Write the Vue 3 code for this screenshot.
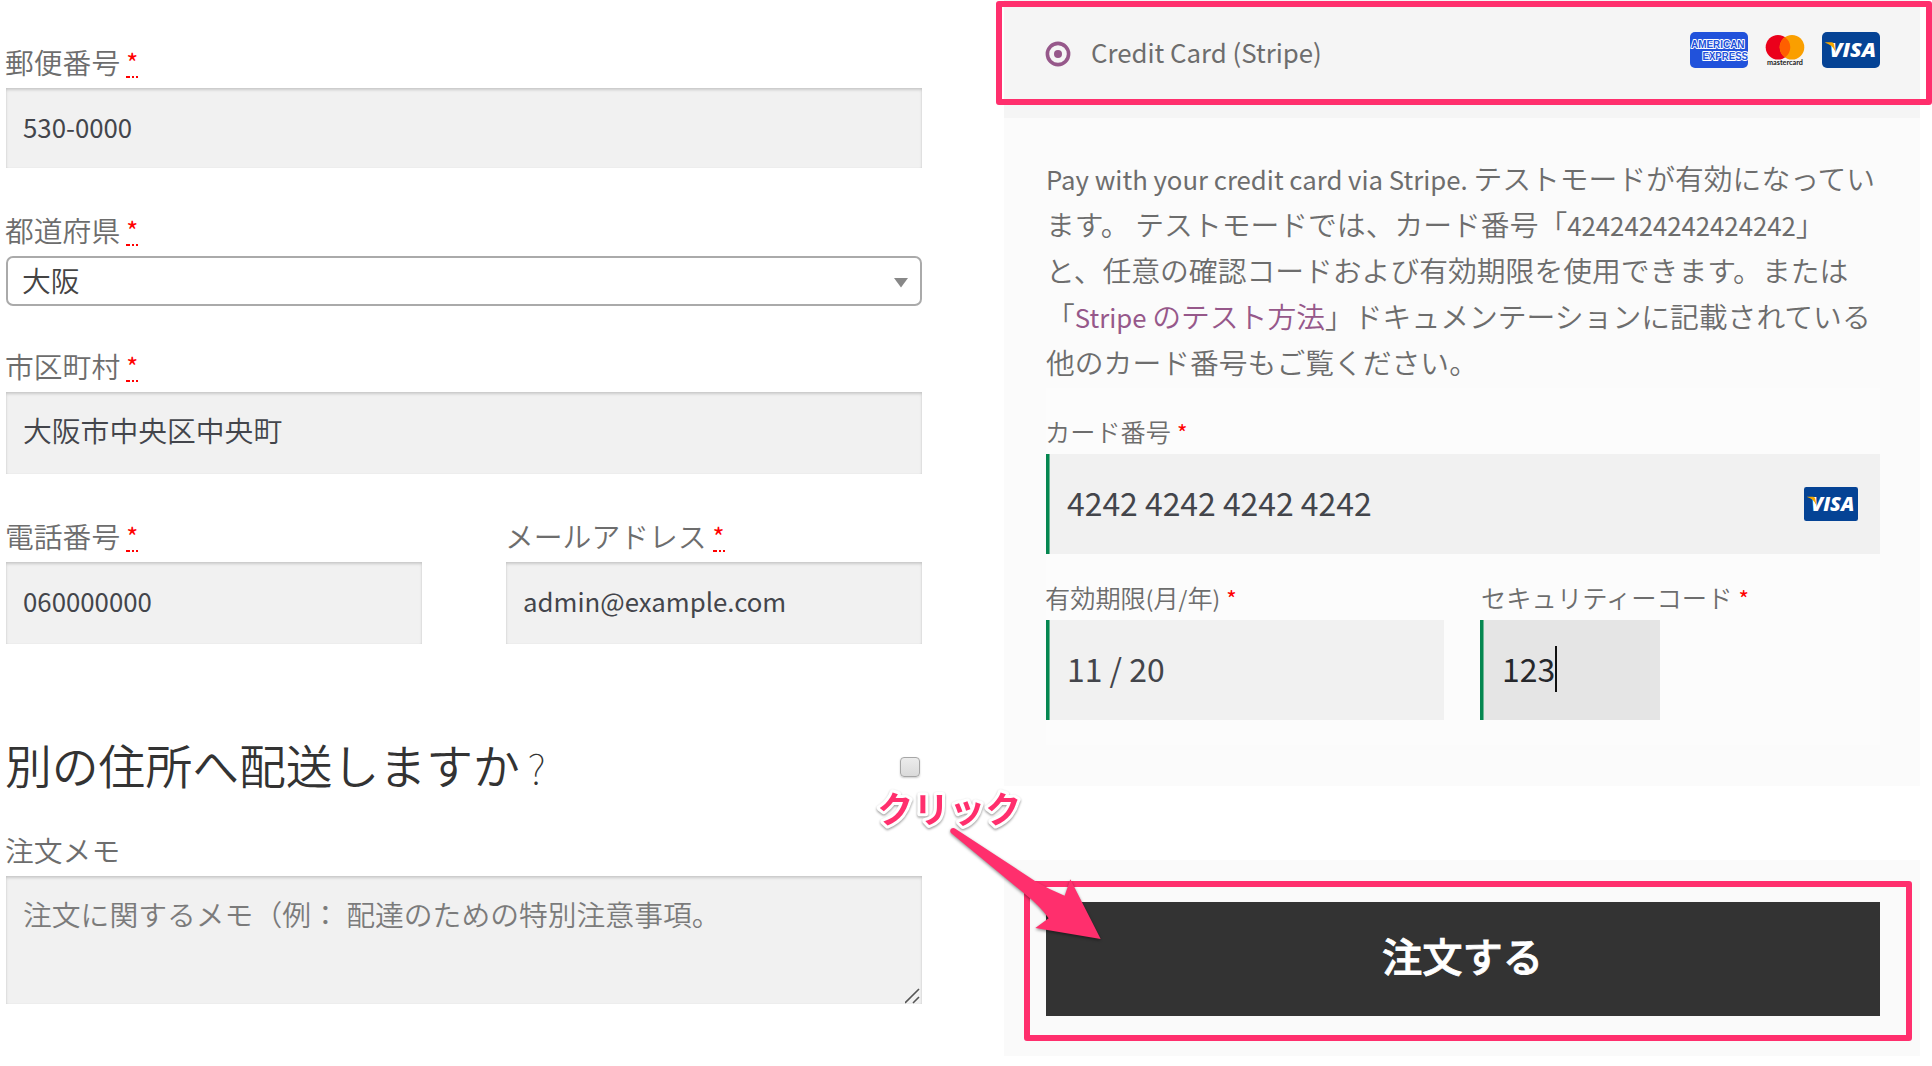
<script setup>
const phone = { label: '電話番号', value: '060000000' }
const email = { label: 'メールアドレス', value: 'admin@example.com' }
</script>

<template>
  <div class="page">
    <section class="billing">
      <div class="label">郵便番号<abbr class="req">*</abbr></div>
      <div class="field zip">530-0000</div>

      <div class="label state-label">都道府県<abbr class="req">*</abbr></div>
      <div class="select">
        <span>大阪</span>
        <svg width="14" height="10" viewBox="0 0 14 10"><path d="M0 0h14L7 9.5z" fill="#888" /></svg>
      </div>

      <div class="label city-label">市区町村<abbr class="req">*</abbr></div>
      <div class="field cjk">大阪市中央区中央町</div>

      <div class="pair">
        <div v-for="f in [phone, email]" :key="f.label" class="half">
          <div class="label">{{ f.label }}<abbr class="req">*</abbr></div>
          <div class="field">{{ f.value }}</div>
        </div>
      </div>

      <div class="shipping">
        <h3>別の住所へ配送しますか<span class="q">?</span></h3>
        <span class="checkbox"></span>
      </div>

      <div class="label">注文メモ</div>
      <div class="field memo">
        <span>注文に関するメモ（例： 配達のための特別注意事項。</span>
        <svg class="grip" width="16" height="16" viewBox="0 0 16 16">
          <path d="M0 15 14 1M8 15l6-6" stroke="#555" stroke-width="1.6" fill="none" />
        </svg>
      </div>
    </section>

    <section class="payment">
      <div class="method">
        <svg class="radio" width="26" height="26" viewBox="0 0 26 26">
          <circle cx="13" cy="13" r="10.6" fill="none" stroke="#96588a" stroke-width="3.6" />
          <circle cx="13" cy="13" r="4" fill="#96588a" />
        </svg>
        <span class="method-name">Credit Card (Stripe)</span>
        <div class="brands">
          <svg width="58" height="36" viewBox="0 0 58 36">
            <rect width="58" height="36" rx="5" fill="#2152db" />
            <g font-family="Liberation Sans, Arial, sans-serif" font-weight="700" font-size="10.4" fill="#2152db" stroke="#fff" stroke-width="2" stroke-linejoin="round" paint-order="stroke">
              <text x="1" y="15.8" textLength="53.5" lengthAdjust="spacingAndGlyphs">AMERICAN</text>
              <text x="12.5" y="27.6" textLength="45.5" lengthAdjust="spacingAndGlyphs">EXPRESS</text>
            </g>
          </svg>
          <svg width="58" height="36" viewBox="0 0 58 36">
            <circle cx="22" cy="15.3" r="12.3" fill="#eb001b" />
            <circle cx="36" cy="15.3" r="12.3" fill="#fa9f00" />
            <path d="M29 5.2a12.3 12.3 0 0 1 0 20.2a12.3 12.3 0 0 1 0-20.2z" fill="#ff5f00" />
            <text x="11" y="32.5" font-family="Lato, sans-serif" font-weight="700" font-size="7.2" fill="#222" textLength="36" lengthAdjust="spacingAndGlyphs">mastercard</text>
          </svg>
          <svg width="58" height="36" viewBox="0 0 58 36">
            <rect width="58" height="36" rx="5" fill="#054395" />
            <text x="7.5" y="25" font-family="Open Sans, sans-serif" font-weight="800" font-style="italic" font-size="20" fill="#fff" textLength="46.5" lengthAdjust="spacingAndGlyphs">VISA</text>
            <path d="M3.3 10.3h6.4q2 0 2.3 2l1.3 7Q10.5 13 3.3 10.7z" fill="#f6a800" />
          </svg>
        </div>
      </div>

      <div class="box">
        <p class="desc">
          <span class="l">Pay with your credit card via Stripe.&nbsp;</span>テストモードが有効になってい<br />ます。<span class="l">&nbsp;</span>テストモードでは、カード番号「<span class="l">4242424242424242</span>」<br />と、任意の確認コードおよび有効期限を使用できます。または<br />「<a><span class="l">Stripe&nbsp;</span>のテスト方法</a>」ドキュメンテーションに記載されている<br />他のカード番号もご覧ください。
        </p>
        <div class="card-form">
          <div class="clabel">カード番号<span class="star">*</span></div>
          <div class="cinput">
            <span>4242 4242 4242 4242</span>
            <svg width="54" height="34" viewBox="0 0 58 36" preserveAspectRatio="none">
              <rect width="58" height="36" rx="2.5" fill="#054395" />
              <text x="7.5" y="25" font-family="Open Sans, sans-serif" font-weight="800" font-style="italic" font-size="20" fill="#fff" textLength="46.5" lengthAdjust="spacingAndGlyphs">VISA</text>
              <path d="M3.3 10.3h6.4q2 0 2.3 2l1.3 7Q10.5 13 3.3 10.7z" fill="#f6a800" />
            </svg>
          </div>
          <div class="crow">
            <div class="expiry">
              <div class="clabel">有効期限<span class="l">(</span>月<span class="l">/</span>年<span class="l">)</span><span class="star">*</span></div>
              <div class="cinput">11 / 20</div>
            </div>
            <div class="cvc">
              <div class="clabel">セキュリティーコード<span class="star">*</span></div>
              <div class="cinput active"><span>123</span><i class="caret"></i></div>
            </div>
          </div>
        </div>
      </div>

      <div class="place">
        <div class="submit">注文する</div>
      </div>
    </section>

    <div class="frame frame-method"></div>
    <div class="frame frame-submit"></div>
    <svg class="callout" width="280" height="220" viewBox="0 0 840 660">
      <path class="arrow" d="M346 266 L585 423 Q630 450 674 467 L691 418 L782 597 L586 564 L626 535 Q600 498 552 460 L333 279 C326 270 336 260 346 266Z" />
      <text class="click" x="112" y="248">クリック</text>
    </svg>
  </div>
</template>

<style>
body {
  margin: 0;
  background: #fff;
}
</style>

<style scoped>
.page {
  position: relative;
  display: flex;
  width: 1932px;
  height: 1066px;
  overflow: hidden;
  box-sizing: border-box;
  background: #fff;
  font-family: 'Noto Sans CJK JP', sans-serif;
  font-weight: 350;
  font-size: 28.8px;
  color: #6d6d6d;
  text-spacing-trim: space-all;
  white-space: nowrap;
}
.page * {
  box-sizing: border-box;
}
.l {
  font-size: 0.894em;
  font-weight: 400;
  line-height: 1;
}
.billing {
  width: 916px;
  margin-left: 6px;
  padding-top: 38px;
}
.label {
  display: flex;
  height: 50px;
  line-height: 47px;
  text-indent: -1px;
}
.req {
  width: 12px;
  height: 40px;
  margin-left: 6px;
  font-size: 25.8px;
  font-weight: 400;
  color: #f00;
  text-align: center;
  text-indent: 0;
  text-decoration: none;
  background: linear-gradient(90deg, #f00 4px, transparent 4px 6px, #f00 6px 8px, transparent 8px 10px, #f00 10px) 0 38px / 12px 2px no-repeat;
}
.field {
  height: 82px;
  padding: 0 17px 5px;
  line-height: 77px;
  font-size: 25.8px;
  font-weight: 400;
  color: #43454b;
  background: #f1f1f1;
  box-shadow: inset 0 2px 3px rgba(0, 0, 0, 0.16), inset 0 0 2px rgba(0, 0, 0, 0.06);
}
.zip {
  height: 80px;
}
.field.cjk {
  font-size: 28.8px;
  font-weight: 350;
  line-height: 75px;
}
.state-label {
  margin-top: 38px;
}
.select {
  display: flex;
  align-items: center;
  justify-content: space-between;
  height: 50px;
  padding: 0 12px 0 14px;
  border: 2px solid #aaa;
  border-radius: 7px;
  color: #444;
}
.select span {
  line-height: 44px;
  padding-bottom: 2px;
}
.select svg {
  margin-top: 3px;
}
.city-label {
  margin-top: 36px;
}
.pair {
  display: flex;
  gap: 84px;
  margin-top: 38px;
}
.half {
  width: 416px;
}
.shipping {
  display: flex;
  justify-content: space-between;
  align-items: center;
  height: 86px;
  margin: 79px 0 17px;
  padding-right: 2px;
}
h3 {
  margin: 0;
  padding-bottom: 5px;
  line-height: 81px;
  font-size: 46.8px;
  font-weight: 350;
  color: #333;
  text-indent: -1px;
}
.q {
  margin-left: 8px;
  font-size: 41px;
  font-weight: 100;
  line-height: 1;
}
.checkbox {
  width: 20px;
  height: 20px;
  margin-top: 2px;
  border: 1.5px solid #a6a6a6;
  border-radius: 4px;
  background: linear-gradient(#ececec, #dadada);
  box-shadow: 0 1px 2px rgba(0, 0, 0, 0.2);
}
.field.memo {
  display: flex;
  justify-content: space-between;
  height: 128px;
  padding-right: 1px;
  padding-bottom: 0;
  line-height: 75px;
  font-size: 28.8px;
  font-weight: 350;
  color: #7b7b7b;
}
.grip {
  align-self: flex-end;
}
.payment {
  width: 916px;
  margin-left: 82px;
}
.method {
  display: flex;
  align-items: center;
  height: 118px;
  padding: 0 40px 15px 41px;
  background: #f5f5f5;
}
.radio {
  margin-top: 4px;
}
.method-name {
  margin-left: 20px;
  font-size: 25.8px;
  font-weight: 400;
  line-height: 103px;
}
.brands {
  display: flex;
  gap: 8px;
  margin: 0 0 3px auto;
}
.box {
  height: 668px;
  padding: 37px 40px 41px 42px;
  background: #fbfbfb;
}
.desc {
  margin: 0 0 3px;
  line-height: 46px;
}
.desc a {
  color: #96588a;
}
.card-form {
  height: 357px;
  width: 834px;
  padding-top: 28px;
  background: #fcfcfc;
}
.clabel {
  height: 38px;
  line-height: 30px;
  font-size: 25.2px;
  text-indent: -1px;
}
.cvc .clabel {
  font-size: 25.3px;
  text-indent: 1px;
}
.star {
  margin-left: 6px;
  font-size: 22.4px;
  font-weight: 400;
  line-height: 1;
  color: #f00;
}
.cinput {
  display: flex;
  align-items: center;
  height: 100px;
  padding: 0 22px 4px 21px;
  line-height: 96px;
  font-size: 31.9px;
  font-weight: 400;
  color: #43454b;
  background: #f1f1f1;
  box-shadow: inset 3px 0 #048650, inset 4px 0 #6db794;
}
.cinput svg {
  margin: 4px 0 0 auto;
}
.crow {
  display: flex;
  gap: 36px;
  margin-top: 28px;
}
.expiry {
  width: 398px;
}
.cvc .cinput {
  width: 180px;
  padding-left: 22px;
}
.cinput.active {
  color: #26282c;
  background: #e5e5e5;
}
.caret {
  width: 2px;
  height: 46px;
  margin-top: 2px;
  background: #111;
}
.place {
  height: 196px;
  margin-top: 74px;
  padding: 42px 40px 40px 42px;
  background: #fafafa;
}
.submit {
  height: 114px;
  padding-right: 1px;
  line-height: 105px;
  font-size: 40.3px;
  font-weight: 500;
  color: #fff;
  text-align: center;
  -webkit-text-stroke: 0.8px #fff;
  background: #333;
}
.frame {
  position: absolute;
  border: 6px solid #ff2f6d;
  border-radius: 3px;
}
.frame-method {
  left: 996px;
  top: 1px;
  width: 936px;
  height: 104px;
}
.frame-submit {
  left: 1024px;
  top: 881px;
  width: 888px;
  height: 160px;
}
.callout {
  position: absolute;
  left: 840px;
  top: 740px;
  overflow: visible;
}
.arrow {
  fill: #ff2f6d;
  filter: drop-shadow(0 4px 4px rgba(0, 0, 0, 0.45));
}
.click {
  font-size: 108px;
  font-weight: 700;
  fill: #ff2f6d;
  stroke: #fff;
  stroke-width: 18px;
  stroke-linejoin: round;
  paint-order: stroke;
  filter: drop-shadow(0 4px 3px rgba(0, 0, 0, 0.4));
}
</style>
